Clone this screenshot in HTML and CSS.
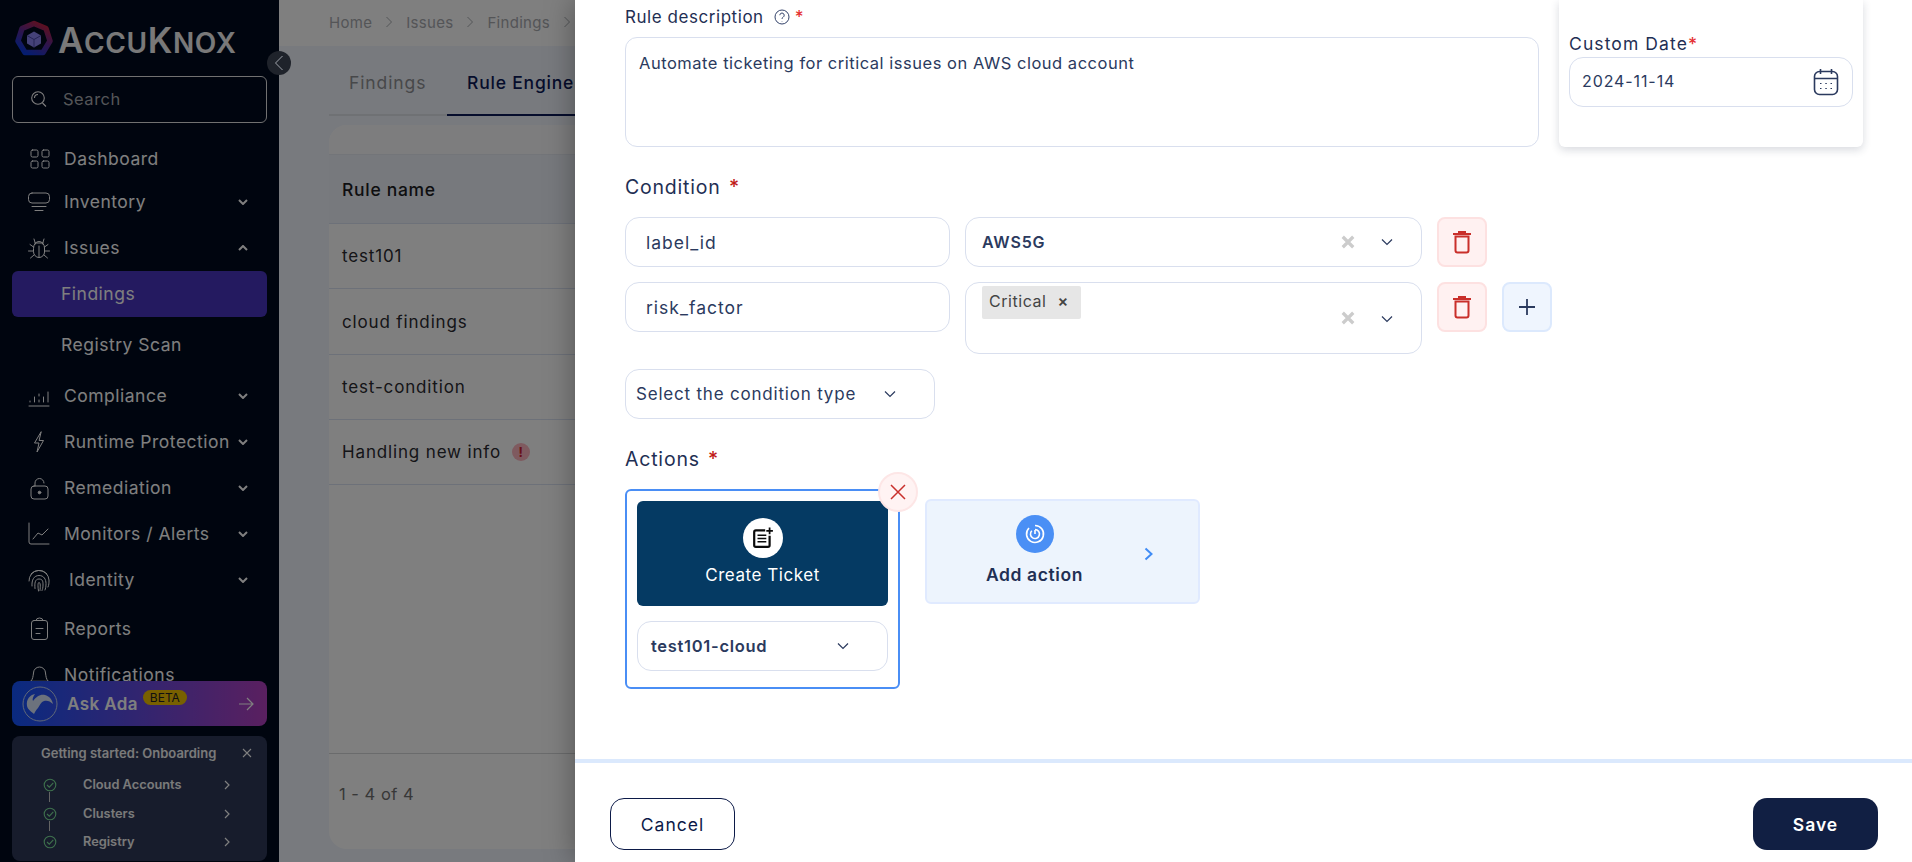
FILE: index.html
```
<!DOCTYPE html>
<html lang="en">
<head>
<meta charset="utf-8">
<title>AccuKnox - Rule Engine</title>
<link rel="stylesheet" href="styles.css">
</head>
<body>
<div class="app">
  <aside class="sidebar">
    <div class="brand">
      <svg class="brand-mark" viewBox="0 0 38 38"><defs><linearGradient id="lg" x1="0.8" y1="0" x2="0.2" y2="1"><stop offset="0" stop-color="#c0203c"/><stop offset="0.5" stop-color="#5a2a9a"/><stop offset="1" stop-color="#0a3ae0"/></linearGradient></defs><path d="M19 3.5 31 8.5 35 21 28 32.5 10 32.5 3 21 7 8.5Z" fill="#000a1e" stroke="url(#lg)" stroke-width="5.5" stroke-linejoin="round"/><path d="M19 11.5 26 15.5 26 23.5 19 27.5 12 23.5 12 15.5Z" fill="#8a84f0"/><path d="M12 15.5 19 19.5 26 15.5M19 19.5V27.5" fill="none" stroke="#4a48a8" stroke-width="1"/></svg>
      <span class="brand-name">A<small>CCU</small>K<small>NOX</small></span>
    </div>
    <div class="search">
      <svg class="ico-search" viewBox="0 0 20 20"><circle cx="9" cy="9" r="6.3"/><path d="M13.5 14 17 17.5M5.5 9a3.5 3.5 0 0 1 3.5-3.5"/></svg>
      <span>Search</span>
    </div>
    <nav class="nav">
      <div class="item">
        <svg class="ico" viewBox="0 0 24 24"><rect x="4" y="3" width="7" height="7" rx="1.5"/><rect x="15" y="3" width="7" height="7" rx="1.5"/><rect x="4" y="14" width="7" height="7" rx="1.5"/><rect x="15" y="14" width="7" height="7" rx="1.5"/></svg>
        <span>Dashboard</span>
      </div>
      <div class="item tight">
        <svg class="ico" viewBox="0 0 24 24"><rect x="1.5" y="3" width="21" height="10" rx="3.5"/><path d="M5 16.5H19M8 20.5H16"/></svg>
        <span>Inventory</span>
        <svg class="caret" viewBox="0 0 10 6"><path d="M1 1 5 5 9 1"/></svg>
      </div>
      <div class="item">
        <svg class="ico" viewBox="0 0 24 24"><path d="M6.5 12a5.5 6.5 0 0 1 11 0v4a5.5 5.5 0 0 1-11 0Z"/><path d="M8.5 8 7 3M15.5 8 17 3M12 10v11M6.5 15H1.5M17.5 15H22.5M6.5 11 3 8.5M17.5 11 21 8.5M7 19l-3.5 3M17 19l3.5 3M8 7h8"/></svg>
        <span>Issues</span>
        <svg class="caret" viewBox="0 0 10 6"><path d="M1 5 5 1 9 5"/></svg>
      </div>
      <div class="item sub active"><span>Findings</span></div>
      <div class="item sub gap"><span>Registry Scan</span></div>
      <div class="item gap">
        <svg class="ico" viewBox="0 0 24 24"><path d="M2 22H22M3 18v-1M7.500 18v-5M12 18v-2M12 12v-2M16.500 18v-5M21 18V8"/></svg>
        <span>Compliance</span>
        <svg class="caret" viewBox="0 0 10 6"><path d="M1 1 5 5 9 1"/></svg>
      </div>
      <div class="item">
        <svg class="ico" viewBox="0 0 24 24"><path d="M14 2 7.500 13H12L10 22 16.500 10.500H12.500Z"/></svg>
        <span>Runtime Protection</span>
        <svg class="caret" viewBox="0 0 10 6"><path d="M1 1 5 5 9 1"/></svg>
      </div>
      <div class="item">
        <svg class="ico" viewBox="0 0 24 24"><rect x="4" y="10" width="17" height="13" rx="3"/><path d="M8 10V7a4.500 4.500 0 0 1 9 0"/><circle class="dot" cx="12.500" cy="16.500" r="1.300"/></svg>
        <span>Remediation</span>
        <svg class="caret" viewBox="0 0 10 6"><path d="M1 1 5 5 9 1"/></svg>
      </div>
      <div class="item">
        <svg class="ico" viewBox="0 0 24 24"><path d="M2 1V20Q2 22 4 22H22M6 17 11 11 15 13 21 7"/></svg>
        <span>Monitors / Alerts</span>
        <svg class="caret" viewBox="0 0 10 6"><path d="M1 1 5 5 9 1"/></svg>
      </div>
      <div class="item identity">
        <svg class="ico" viewBox="0 0 24 24"><path d="M4 6A10.500 10.500 0 0 1 20 6M2 13A10 10 0 0 1 22 12c0 3 0 5-1 7M5 18C4.500 12 7 7.500 12 7.500s7 4 7 8-.5 5-1 6.500M8 20.500C7.500 15 8 11 12 11s4 3 4 6-.5 4-1 5.500M11.500 23C11 20 10.500 14.500 12 14.500s1.500 4 1 8"/></svg>
        <span>Identity</span>
        <svg class="caret" viewBox="0 0 10 6"><path d="M1 1 5 5 9 1"/></svg>
      </div>
      <div class="item nudge">
        <svg class="ico" viewBox="0 0 24 24"><rect x="4.500" y="3.500" width="16" height="19" rx="2.500"/><path d="M9 3.500a3.500 2.500 0 0 1 7 0M9 11.500H16M9 16.500H13"/></svg>
        <span>Reports</span>
      </div>
      <div class="item">
        <svg class="ico" viewBox="0 0 24 24"><path d="M4 18C6 16 6 13 6.500 10a6 6 0 0 1 12 0C19 13 19 16 21 18Z"/></svg>
        <span>Notifications</span>
      </div>
    </nav>
    <div class="ask">
      <svg class="ask-face" viewBox="0 0 36 36"><circle cx="18" cy="18" r="17"/><path class="hair" d="M5 20C4 13 8 9 13 8 11 11 10 13 11 15 14 11 18 8 23 9c4 1 7 4 8 9-3-3-6-4-9-3-3 1-4 4-6 7-2 2-3 4-4 6-2-2-6-4-7-8Z"/></svg>
      <span class="ask-name">Ask Ada</span>
      <span class="beta">BETA</span>
      <svg class="ask-arrow" viewBox="0 0 16 14"><path d="M1 7H15M9 1 15 7 9 13"/></svg>
    </div>
    <div class="onboard">
      <div class="onboard-head"><span>Getting started: Onboarding</span><svg class="ob-x" viewBox="0 0 10 10"><path d="M1 1 9 9M9 1 1 9"/></svg></div>
      <div class="ob-row">
        <svg class="ob-check" viewBox="0 0 14 14"><circle cx="7" cy="7" r="5.800"/><path d="M4 7 6.300 9.200 10.300 4.800"/></svg>
        <span>Cloud Accounts</span>
        <svg class="ob-next" viewBox="0 0 6 10"><path d="M1 1 5 5 1 9"/></svg>
      </div>
      <div class="ob-row">
        <svg class="ob-check" viewBox="0 0 14 14"><circle cx="7" cy="7" r="5.800"/><path d="M4 7 6.300 9.200 10.300 4.800"/></svg>
        <span>Clusters</span>
        <svg class="ob-next" viewBox="0 0 6 10"><path d="M1 1 5 5 1 9"/></svg>
      </div>
      <div class="ob-row last">
        <svg class="ob-check" viewBox="0 0 14 14"><circle cx="7" cy="7" r="5.800"/><path d="M4 7 6.300 9.200 10.300 4.800"/></svg>
        <span>Registry</span>
        <svg class="ob-next" viewBox="0 0 6 10"><path d="M1 1 5 5 1 9"/></svg>
      </div>
    </div>
  </aside>

  <main class="main">
    <div class="crumbs">
      <span>Home</span><svg class="crumb-sep" viewBox="0 0 8 12"><path d="M1.500 1 6.500 6 1.500 11"/></svg>
      <span>Issues</span><svg class="crumb-sep" viewBox="0 0 8 12"><path d="M1.500 1 6.500 6 1.500 11"/></svg>
      <span>Findings</span><svg class="crumb-sep" viewBox="0 0 8 12"><path d="M1.500 1 6.500 6 1.500 11"/></svg>
    </div>
    <div class="content">
      <div class="tabs">
        <div class="tab">Findings</div>
        <div class="tab current">Rule Engine</div>
      </div>
      <section class="card">
        <div class="card-top"></div>
        <div class="thead">Rule name</div>
        <div class="row r1">test101</div>
        <div class="row r2">cloud findings</div>
        <div class="row r3">test-condition</div>
        <div class="row r3">Handling new info <span class="warn">!</span></div>
        <div class="spacer"></div>
        <div class="pager">1 - 4 of 4</div>
      </section>
    </div>
  </main>

  <div class="scrim"></div>
  <button class="collapse" aria-label="Collapse"><svg viewBox="0 0 10 16"><path d="M8.500 1 1.500 8 8.500 15"/></svg></button>

  <div class="drawer">
    <div class="drawer-body">
      <div class="top-row">
        <div class="desc">
          <div class="label">Rule description
            <svg class="help" viewBox="0 0 16 16"><circle cx="8" cy="8" r="7"/><path d="M5.800 6.200a2.200 2.200 0 1 1 3.400 1.900c-.8.500-1.200.9-1.200 1.800M8 12v.4"/></svg>
            <i class="req">*</i></div>
          <div class="textarea">Automate ticketing for critical issues on AWS cloud account</div>
        </div>
        <div class="date-panel">
          <div class="date-label">Custom Date<i class="req">*</i></div>
          <div class="control date-input">
            <span>2024-11-14</span>
            <svg class="cal" viewBox="0 0 26 28"><rect x="1.500" y="3.500" width="23" height="23" rx="5"/><path d="M1.500 10.500H24.500M7.500 1V6M18.500 1V6"/><path class="cal-dots" d="M7 15.500h1.500M12.300 15.500h1.500M17.500 15.500h1.500M7 20.500h1.500M12.300 20.500h1.500M17.500 20.500h1.500"/></svg>
          </div>
        </div>
      </div>

      <div class="section-label first">Condition <i class="req dark">*</i></div>
      <div class="cond-row">
        <div class="control field">label_id</div>
        <div class="control select">
          <strong>AWS5G</strong>
          <svg class="clear" viewBox="0 0 12 12"><path d="M1.500 1.500 10.500 10.500M10.500 1.500 1.500 10.500"/></svg>
          <svg class="chev" viewBox="0 0 12 8"><path d="M1 1.500 6 6.500 11 1.500"/></svg>
        </div>
        <button class="icon-btn del"><svg viewBox="0 0 20 24"><path class="lid" d="M1 4H19M7 3V2H13V3"/><path d="M3.500 6.500V20.500Q3.500 22.500 5.500 22.500H14.500Q16.500 22.500 16.500 20.500V6.500Z"/></svg></button>
      </div>
      <div class="cond-row">
        <div class="control field">risk_factor</div>
        <div class="control select tall">
          <span class="chip">Critical <b>×</b></span>
          <svg class="clear" viewBox="0 0 12 12"><path d="M1.500 1.500 10.500 10.500M10.500 1.500 1.500 10.500"/></svg>
          <svg class="chev" viewBox="0 0 12 8"><path d="M1 1.500 6 6.500 11 1.500"/></svg>
        </div>
        <button class="icon-btn del"><svg viewBox="0 0 20 24"><path class="lid" d="M1 4H19M7 3V2H13V3"/><path d="M3.500 6.500V20.500Q3.500 22.500 5.500 22.500H14.500Q16.500 22.500 16.500 20.500V6.500Z"/></svg></button>
        <button class="icon-btn add"><svg viewBox="0 0 18 18"><path d="M9 1V17M1 9H17"/></svg></button>
      </div>
      <div class="control cond-type">
        <span>Select the condition type</span>
        <svg class="chev" viewBox="0 0 12 8"><path d="M1 1.500 6 6.500 11 1.500"/></svg>
      </div>

      <div class="section-label">Actions <i class="req dark">*</i></div>
      <div class="actions">
        <div class="action-box">
          <button class="remove"><svg viewBox="0 0 18 18"><path d="M2 2 16 16M16 2 2 16"/></svg></button>
          <div class="ticket">
            <span class="ticket-ico"><svg viewBox="0 0 20 20"><path class="t-body" d="M12 3H3.500Q2 3 2 4.500V16.500Q2 18 3.500 18H14.500Q16 18 16 16.500V8"/><path class="t-lines" d="M5 7.500H13M5 10.500H13M5 13.500H13"/><path class="t-plus" d="M16 0.500V6.500M13 3.500H19"/></svg></span>
            <span class="ticket-name">Create Ticket</span>
          </div>
          <div class="control ticket-select">
            <strong>test101-cloud</strong>
            <svg class="chev" viewBox="0 0 12 8"><path d="M1 1.500 6 6.500 11 1.500"/></svg>
          </div>
        </div>
        <div class="add-action">
          <span class="radar"><svg viewBox="0 0 24 24"><path d="M12 3.500A8.500 8.500 0 1 1 6 6M12 7.500A4.500 4.500 0 1 1 8.800 8.800M12 8V12"/></svg></span>
          <span class="add-name">Add action</span>
          <svg class="add-next" viewBox="0 0 10 14"><path d="M1.500 1.500 7.500 7 1.500 12.500"/></svg>
        </div>
      </div>
    </div>
    <div class="drawer-foot">
      <button class="btn ghost">Cancel</button>
      <button class="btn solid">Save</button>
    </div>
  </div>
</div>
</body>
</html>
```
FILE: styles.css
```
* { box-sizing: border-box; }
html, body { margin: 0; height: 100%; overflow: hidden; }
body { font-family: Inter, "Liberation Sans", sans-serif; color: #1f2f54; background: #f1f5fd; }
button { font-family: inherit; cursor: pointer; padding: 0; }
i { font-style: normal; }

.app { position: relative; display: flex; width: 1912px; height: 862px; overflow: hidden; }

/* Sidebar */
.sidebar { flex: 0 0 279px; display: flex; flex-direction: column; background: #000a1e; color: #fff; padding: 0 12px 1px; }
.brand { height: 76px; display: flex; align-items: flex-start; padding: 20px 0 0 3px; }
.brand-mark { width: 38px; height: 38px; flex: none; }
.brand-name { font-size: 35px; line-height: 40px; font-weight: 600; color: #f2f2f2; letter-spacing: .6px; margin-left: 5px; white-space: nowrap; }
.brand-name small { font-size: 28px; }
.search { width: 255px; height: 47px; flex: none; border: 1px solid #e2e2e2; border-radius: 6px; display: flex; align-items: center; padding: 0 0 2px 16px; gap: 14px; font-size: 16.500px; letter-spacing: .5px; color: #a8aab0; }
.ico-search { width: 20px; height: 20px; fill: none; stroke: #fff; stroke-width: 1.100; }
.nav { flex: 1; min-height: 0; margin-top: 13px; overflow: hidden; }
.item { height: 46px; display: flex; align-items: center; padding: 0 19px 0 15px; font-size: 17.500px; letter-spacing: .5px; color: #fff; border-radius: 6px; }
.item > span { margin-left: 13px; white-space: nowrap; position: relative; top: -1px; }
.item.tight { margin-top: -3px; }
.item.gap { margin-top: 5px; }
.item.nudge { margin-top: 3px; }
.item.identity > span { margin-left: 18px; }
.item.sub > span { margin-left: 34px; }
.item.active { background: #4834c0; }
.ico { width: 24px; height: 24px; flex: none; fill: none; stroke: #fff; stroke-width: 1; stroke-linecap: round; stroke-linejoin: round; }
.dot { fill: #fff; }
.caret { width: 10px; height: 6px; margin-left: auto; flex: none; fill: none; stroke: #fff; stroke-width: 2; }
.ask { height: 45px; flex: none; border-radius: 8px; background: linear-gradient(90deg, #1454ff, #b440c0); display: flex; align-items: center; padding-left: 10px; }
.ask-face { width: 36px; height: 36px; flex: none; fill: none; stroke: #c0d0f0; stroke-width: 1; }
.ask-face .hair { fill: #d8e4fa; stroke: none; }
.ask-name { font-size: 17px; font-weight: 600; letter-spacing: .4px; margin-left: 9px; color: #fff; }
.beta { font-size: 12px; line-height: 15px; height: 15px; border-radius: 8px; background: #f0c000; color: #222; padding: 0 7px; margin: -12px 0 0 5px; }
.ask-arrow { width: 16px; height: 14px; margin-left: auto; margin-right: 13px; fill: none; stroke: #fff; stroke-width: 1.200; }
.onboard { height: 125px; flex: none; margin-top: 10px; background: #2e3858; border-radius: 8px; padding: 9px 0 0 29px; font-size: 13px; font-weight: 600; color: #f4f4f4; position: relative; }
.onboard-head { display: flex; align-items: center; height: 16px; white-space: nowrap; }
.ob-x { width: 10px; height: 10px; margin-left: auto; margin-right: 15px; fill: none; stroke: #fff; stroke-width: 1.100; }
.ob-row { display: flex; align-items: center; height: 29px; padding-left: 2px; position: relative; font-size: 12.800px; }
.onboard-head + .ob-row { margin-top: 9px; }
.ob-row.last { margin-top: -1px; }
.ob-row::after { content: ""; position: absolute; left: 8px; top: 22px; height: 10px; width: 1px; background: #c8c8c8; }
.ob-row.last::after { display: none; }
.ob-row > span { margin-left: 26px; }
.ob-check { width: 14px; height: 14px; flex: none; fill: none; stroke: #7ce09a; stroke-width: 1.100; }
.ob-next { width: 6px; height: 10px; margin-left: auto; margin-right: 37px; fill: none; stroke: #fff; stroke-width: 1.200; }

/* Main */
.main { flex: 1; min-width: 0; display: flex; flex-direction: column; }
.crumbs { height: 46px; flex: none; background: #fff; display: flex; align-items: center; padding: 0 0 2px 50px; font-size: 15px; letter-spacing: .3px; color: #a8aaaf; gap: 11px; }
.crumb-sep { width: 8px; height: 12px; margin: 0 2px; fill: none; stroke: #a8aaaf; stroke-width: 1; }
.content { flex: 1; min-height: 0; padding: 0 32px 0 50px; display: flex; flex-direction: column; }
.tabs { height: 70px; flex: none; display: flex; align-items: flex-end; border-bottom: 2px solid #dfe2e8; }
.tab { height: 70px; line-height: 73px; padding: 0 20px; width: 118px; font-size: 17.500px; letter-spacing: .9px; color: #8f9094; white-space: nowrap; margin-bottom: -2px; }
.tab.current { width: auto; padding: 0 0 0 20px; margin-left: 0; flex: 1; color: #0c1a58; font-weight: 500; letter-spacing: .8px; border-bottom: 2px solid #0c1a58; }
.card { margin-top: 9px; height: 724px; background: #fff; border-radius: 18px; display: flex; flex-direction: column; overflow: hidden; font-size: 17px; letter-spacing: .85px; color: #2a2a30; }
.card-top { height: 30px; flex: none; background: #fbfbfc; border-bottom: 1px solid #e6eaf2; }
.thead { height: 69px; flex: none; background: #eef2fa; display: flex; align-items: center; padding-left: 13px; font-weight: 500; font-size: 17.500px; letter-spacing: .7px; color: #1c1c22; border-bottom: 1px solid #dbe3f2; }
.row { flex: none; display: flex; align-items: center; padding-left: 13px; border-bottom: 1px solid #dbe3f2; }
.r1 { height: 65px; }
.r2 { height: 66px; }
.r3 { height: 65px; }
.warn { width: 18px; height: 18px; margin-left: 11px; border-radius: 50%; background: #ffb4bf; color: #d02030; display: flex; align-items: center; justify-content: center; font-size: 13px; font-weight: 700; }
.spacer { flex: 1; }
.pager { height: 96px; flex: none; border-top: 1px solid #d4d6d8; display: flex; align-items: center; padding: 0 0 16px 10px; color: #707070; font-size: 16.500px; letter-spacing: .5px; }

/* Overlay */
.scrim { position: absolute; inset: 0; background: rgba(0, 0, 0, .5); }
.collapse { position: absolute; left: 267px; top: 51px; width: 24px; height: 24px; border: 0; border-radius: 50%; background: #1f232b; display: flex; align-items: center; justify-content: center; }
.collapse svg { width: 10px; height: 16px; fill: none; stroke: #a0a4ac; stroke-width: 1; }

.drawer { position: absolute; left: 575px; top: 0; right: 0; bottom: 0; background: #fff; display: flex; flex-direction: column; box-shadow: 0 0 28px rgba(0, 0, 0, .35); }
.drawer-body { flex: 1; min-height: 0; padding: 0 49px 0 50px; overflow: hidden; }
.top-row { display: flex; height: 147px; gap: 20px; }
.desc { flex: 1; min-width: 0; display: flex; flex-direction: column; padding-top: 4px; }
.label { height: 26px; line-height: 26px; font-size: 17px; letter-spacing: .55px; display: flex; align-items: center; }
.help { width: 16px; height: 16px; margin: 0 5px 0 10px; fill: none; stroke: #33426a; stroke-width: 1; }
.req { color: #e53232; font-weight: 500; }
.req.dark { color: #c01818; margin-left: 2px; }
.textarea { flex: 1; margin-top: 7px; border: 1px solid #d9dfee; border-radius: 12px; padding: 13px 13px; font-size: 16.500px; line-height: 24px; letter-spacing: .52px; color: #2b3a5e; }
.date-panel { flex: 0 0 304px; background: #fff; border-radius: 0 0 6px 6px; box-shadow: 0 3px 8px rgba(40, 50, 80, .18); padding: 31px 10px 0; }
.date-label { height: 26px; line-height: 26px; font-size: 17.500px; letter-spacing: 1.100px; }
.control { border: 1px solid #d9dfee; border-radius: 14px; background: #fff; display: flex; align-items: center; height: 50px; font-size: 17.500px; letter-spacing: 1px; color: #2b3a5e; }
.date-input { padding: 0 13px 2px 12px; justify-content: space-between; font-size: 16px; letter-spacing: .9px; }
.cal { width: 26px; height: 28px; margin-top: 2px; fill: none; stroke: #2b3a5e; stroke-width: 1.600; }
.cal-dots { stroke-width: 1.200; stroke-dasharray: 1.500 4; }
.section-label { margin-top: 27px; height: 26px; line-height: 26px; font-size: 19.500px; letter-spacing: .8px; }
.section-label.first { margin-top: 27px; }
.cond-row { display: flex; align-items: flex-start; gap: 15px; margin-top: 17px; }
.cond-row + .cond-row { margin-top: 15px; }
.field { width: 325px; flex: none; padding-left: 20px; }
.select { width: 457px; flex: none; padding: 0 28px 0 16px; position: relative; font-size: 16px; letter-spacing: .8px; }
.select strong { font-weight: 600; }
.select.tall { height: 72px; align-items: flex-start; }
.clear { width: 14px; height: 14px; margin-left: auto; fill: none; stroke: #ccc; stroke-width: 2.800; }
.select .chev { margin-left: 26px; margin-top: -1px; }
.select.tall .clear { margin-top: 28px; }
.select.tall .chev { margin-top: 32px; }
.chev { width: 12px; height: 8px; flex: none; fill: none; stroke: #2b3a5e; stroke-width: 1.200; }
.chip { margin-top: 3px; height: 33px; width: 99px; background: #e6e6e6; border-radius: 2px; display: flex; align-items: center; padding: 0 0 3px 7px; font-size: 16px; color: #444; letter-spacing: .55px; white-space: nowrap; }
.chip b { font-size: 16px; font-weight: 600; color: #444; margin-left: 11px; }
.icon-btn { width: 50px; height: 50px; flex: none; border-radius: 8px; display: flex; align-items: center; justify-content: center; }
.del { background: #fff1f1; border: 2px solid #fde1e1; }
.del svg { width: 20px; height: 24px; fill: none; stroke: #c92f2a; stroke-width: 2; }
.add { background: #eff5fe; border: 2px solid #dce9fd; }
.add svg { width: 18px; height: 18px; fill: none; stroke: #2b3a5e; stroke-width: 1.800; }
.cond-type { width: 310px; margin-top: 15px; padding: 0 38px 0 10px; justify-content: space-between; font-size: 17px; letter-spacing: .8px; }
.actions { display: flex; align-items: flex-start; gap: 25px; margin-top: 17px; }
.action-box { position: relative; width: 275px; height: 200px; flex: none; border: 2px solid #4a8ef5; border-radius: 6px; padding: 10px; }
.remove { position: absolute; right: -20px; top: -19px; width: 40px; height: 40px; border-radius: 50%; background: #fff3f3; border: 2px solid #fde6e6; display: flex; align-items: center; justify-content: center; }
.remove svg { width: 18px; height: 18px; fill: none; stroke: #c9302c; stroke-width: 1.500; }
.ticket { height: 105px; background: #053a63; border-radius: 6px; display: flex; flex-direction: column; align-items: center; padding-top: 17px; color: #fff; }
.ticket-ico { width: 40px; height: 40px; border-radius: 50%; background: #fff; display: flex; align-items: center; justify-content: center; }
.ticket-ico svg { width: 22px; height: 22px; fill: none; stroke: #0a0a0a; stroke-width: 2; }
.t-lines { stroke-width: 1.400; }
.t-plus { stroke-width: 1.600; }
.ticket-name { font-size: 17px; letter-spacing: .55px; margin-top: 7px; white-space: nowrap; }
.ticket-select { margin-top: 15px; padding: 0 38px 0 13px; justify-content: space-between; font-size: 16.500px; letter-spacing: .7px; }
.ticket-select strong { font-weight: 600; }
.add-action { position: relative; margin-top: 10px; width: 275px; height: 105px; background: #edf4fd; border: 2px solid #e0eaff; border-radius: 6px; display: flex; flex-direction: column; align-items: center; padding: 14px 56px 0 0; }
.radar { width: 38px; height: 38px; border-radius: 50%; background: #4a8ff5; display: flex; align-items: center; justify-content: center; }
.radar svg { width: 24px; height: 24px; fill: none; stroke: #fff; stroke-width: 1.600; }
.add-name { font-size: 17.500px; font-weight: 600; letter-spacing: .6px; margin-top: 11px; white-space: nowrap; }
.add-next { position: absolute; right: 44px; top: 46px; width: 10px; height: 14px; fill: none; stroke: #3f8bf5; stroke-width: 2; }
.drawer-foot { height: 103px; flex: none; border-top: 4px solid #dbe9fd; display: flex; justify-content: space-between; padding: 35px 34px 0 35px; }
.btn { width: 125px; height: 52px; border-radius: 14px; font-size: 17.500px; letter-spacing: 1px; }
.ghost { background: #fff; border: 1.500px solid #0c1a48; color: #0c1a48; }
.solid { background: #111f43; border: 0; color: #fff; font-weight: 600; }
```
